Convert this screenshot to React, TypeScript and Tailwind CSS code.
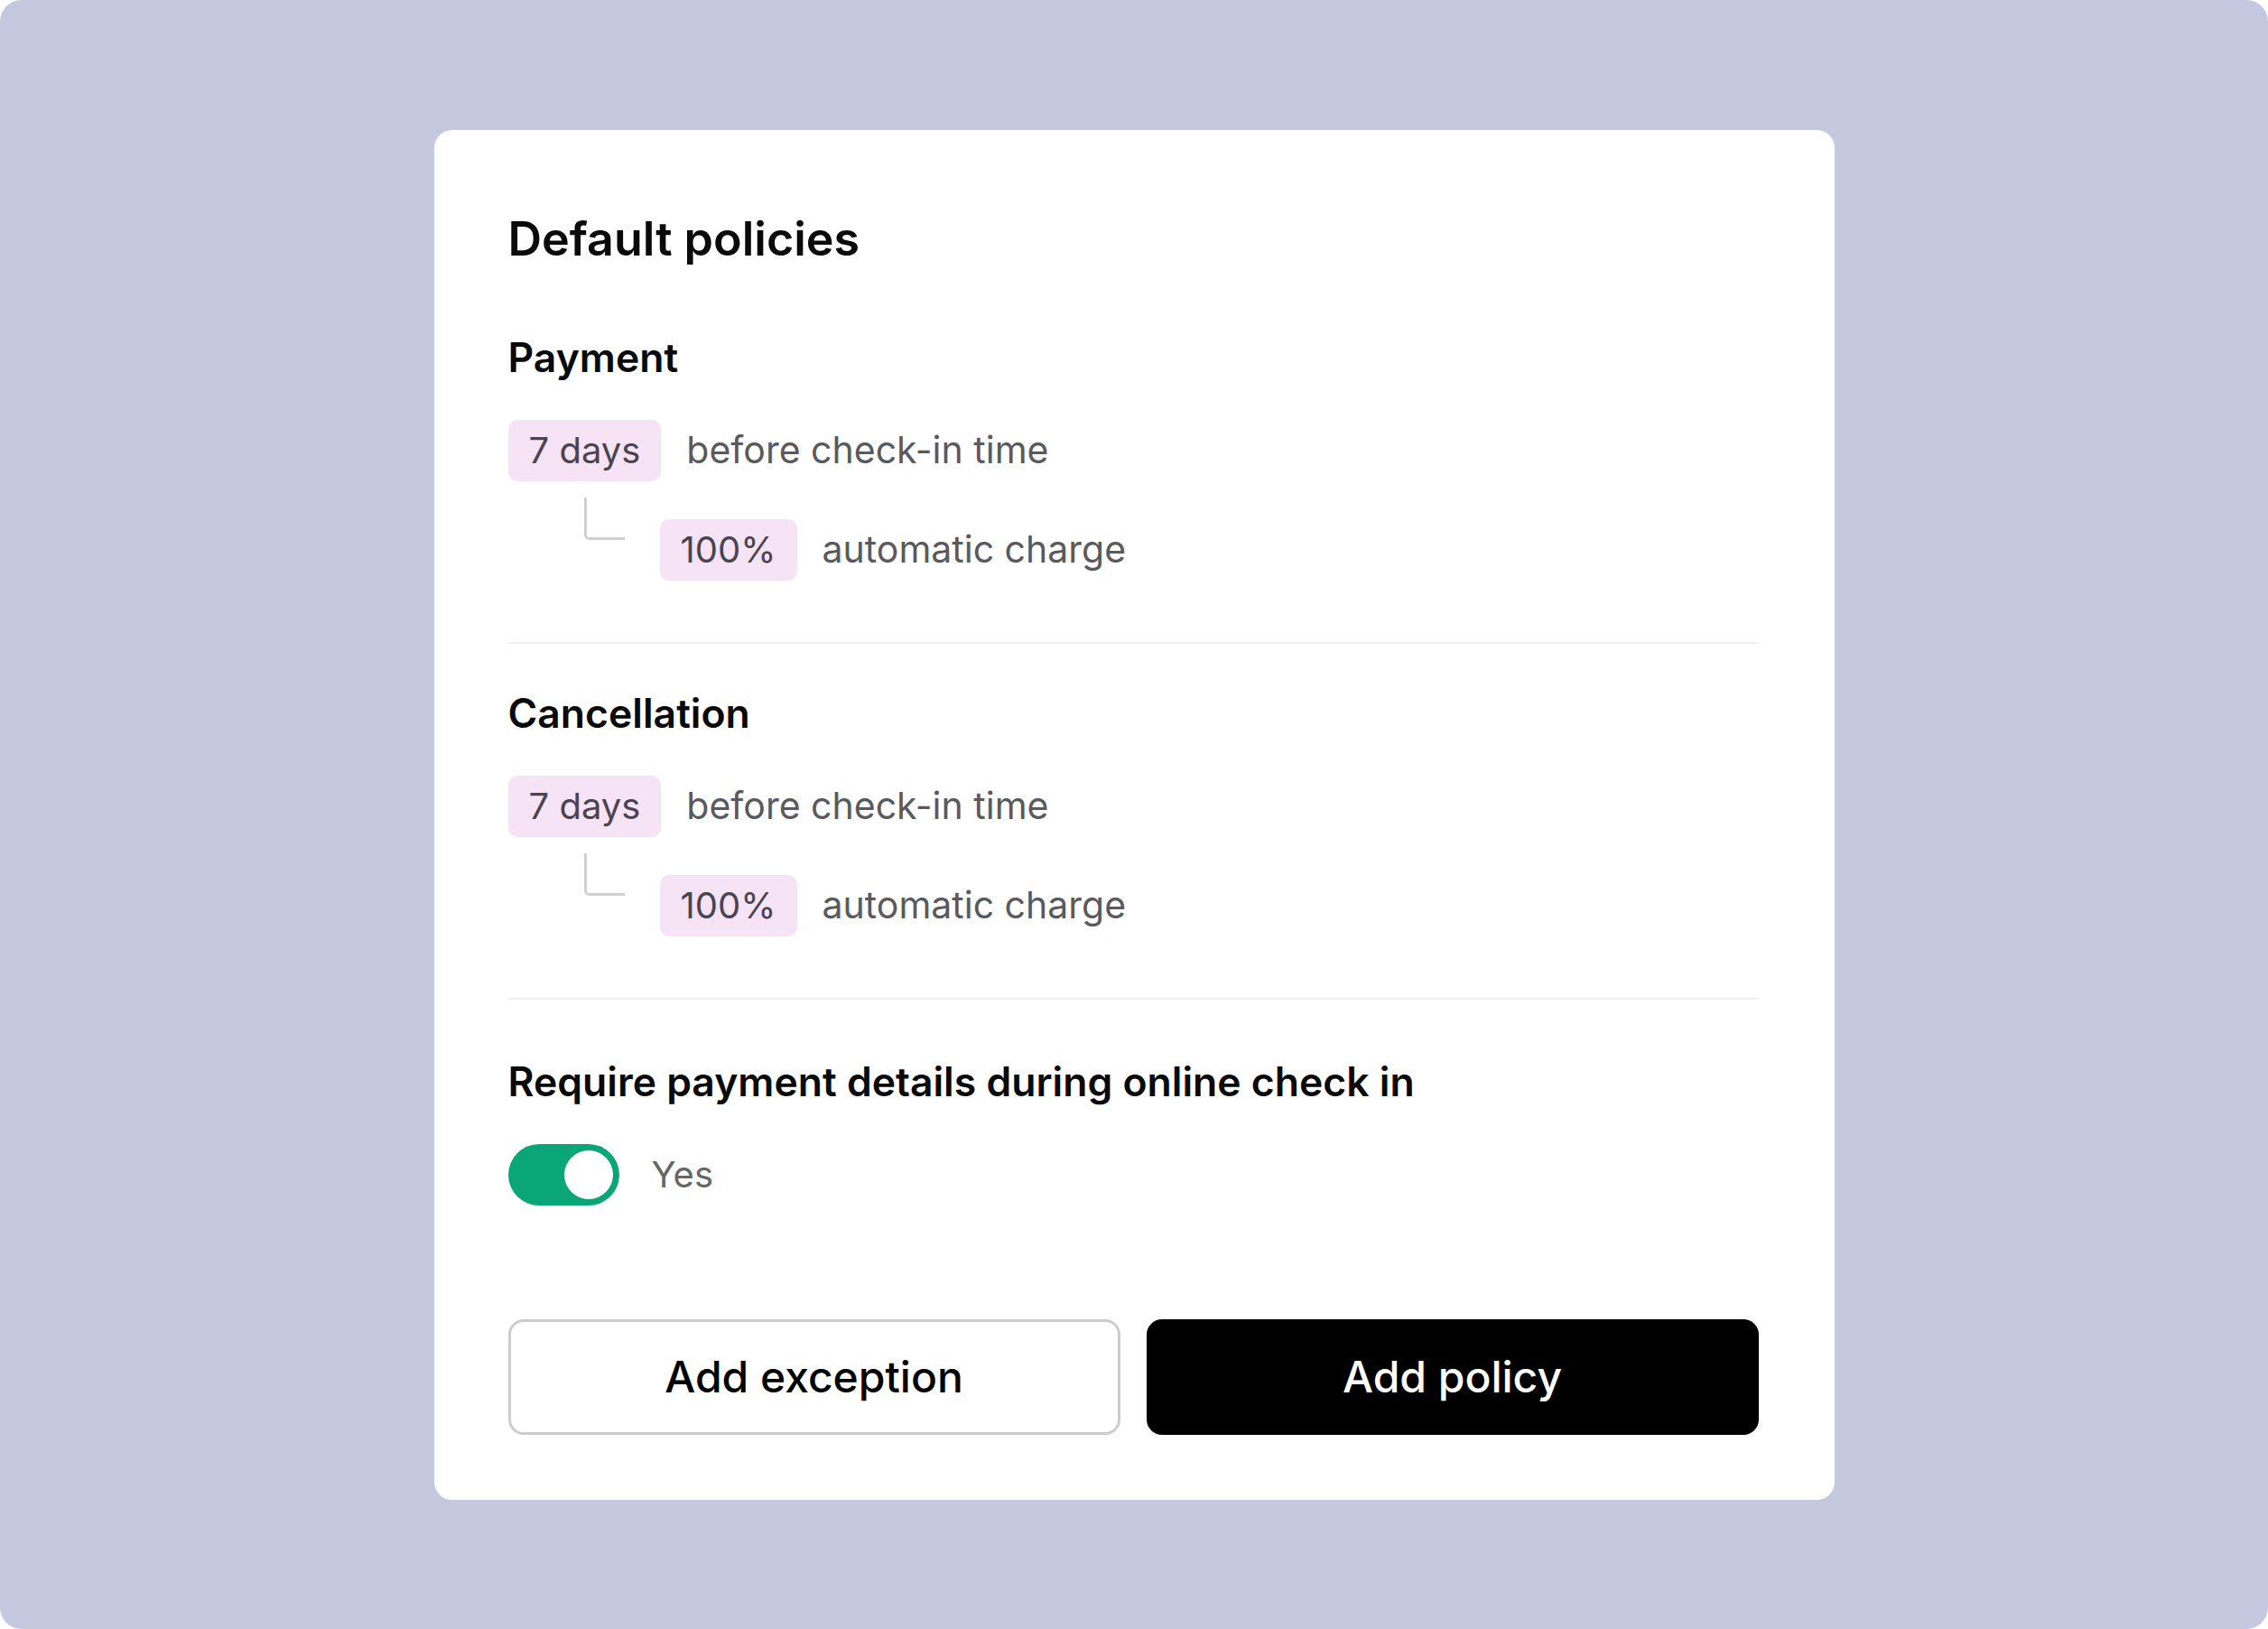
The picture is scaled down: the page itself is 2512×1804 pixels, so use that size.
import React, { useState } from 'react';

interface RuleRow {
  amount: string;
  amountText: string;
  share: string;
  shareText: string;
}

interface PolicySection {
  title: string;
  rule: RuleRow;
}

const sections: PolicySection[] = [
  {
    title: 'Payment',
    rule: { amount: '7 days', amountText: 'before check-in time', share: '100%', shareText: 'automatic charge' },
  },
  {
    title: 'Cancellation',
    rule: { amount: '7 days', amountText: 'before check-in time', share: '100%', shareText: 'automatic charge' },
  },
];

const Chip: React.FC<{ label: string }> = ({ label }) => (
  <span className="flex h-[68px] items-center rounded-[10px] bg-[#f6e3f6] px-[23px] text-[40px] leading-none text-[#4c4351]">
    {label}
  </span>
);

const Rule: React.FC<{ rule: RuleRow }> = ({ rule }) => (
  <div className="mt-[44px] flex flex-col">
    <div className="flex items-center gap-[28px]">
      <Chip label={rule.amount} />
      <span className="text-[41px] leading-none text-[#5a5a5e]">{rule.amountText}</span>
    </div>
    <div className="mt-[42px] flex items-start">
      {/* tree connector */}
      <div className="w-[168px] shrink-0">
        <div className="ml-[84px] mt-[-24px] h-[47px] w-[45px] rounded-bl-[6px] border-b-[3px] border-l-[3px] border-[#d0d0d0]" />
      </div>
      <div className="flex items-center gap-[28px]">
        <Chip label={rule.share} />
        <span className="text-[41px] leading-none text-[#5a5a5e]">{rule.shareText}</span>
      </div>
    </div>
  </div>
);

export default function App() {
  const [requireDetails, setRequireDetails] = useState(true);

  return (
    <div className="h-screen w-full bg-white font-['Inter',sans-serif]">
      <div className="flex h-full w-full items-center justify-center rounded-[24px] bg-[#c4c9df]">
        <div className="flex w-[1551px] flex-col rounded-[20px] bg-white pb-[72px] pl-[82px] pr-[84px] pt-[90px]">
          <h1 className="text-[52px] font-semibold leading-[62px] text-[#0a0a0a]">Default policies</h1>

          {sections.map((s, i) => (
            <div key={s.title} className="flex flex-col">
              <h2
                className={
                  (i === 0 ? 'mt-[75px]' : 'mt-[52px]') +
                  ' text-[44.5px] font-semibold leading-[50px] text-[#0a0a0a]'
                }
              >
                {s.title}
              </h2>
              <Rule rule={s.rule} />
              <div className="mt-[68px] h-[2px] w-full bg-[#f0f0f0]" />
            </div>
          ))}

          <h2 className="mt-[66px] text-[44.5px] font-semibold leading-[50px] text-[#0a0a0a]">
            Require payment details during online check in
          </h2>
          <div className="mt-[44px] flex items-center gap-[36px]">
            <button
              onClick={() => setRequireDetails(!requireDetails)}
              className={
                'flex h-[68px] w-[123px] items-center rounded-full p-[7px] ' +
                (requireDetails ? 'justify-end bg-[#0aa677]' : 'justify-start bg-[#d4d4d8]')
              }
            >
              <span className="h-[54px] w-[54px] rounded-full bg-white" />
            </button>
            <span className="text-[40px] leading-none text-[#666666]">{requireDetails ? 'Yes' : 'No'}</span>
          </div>

          <div className="mt-[126px] grid grid-cols-2 gap-[29px]">
            <button className="flex h-[128px] items-center justify-center rounded-[17px] border-[3px] border-[#cccccc] bg-white text-[48px] font-medium text-black">
              Add exception
            </button>
            <button className="flex h-[128px] items-center justify-center rounded-[17px] bg-black text-[48px] font-medium text-white">
              Add policy
            </button>
          </div>
        </div>
      </div>
    </div>
  );
}
